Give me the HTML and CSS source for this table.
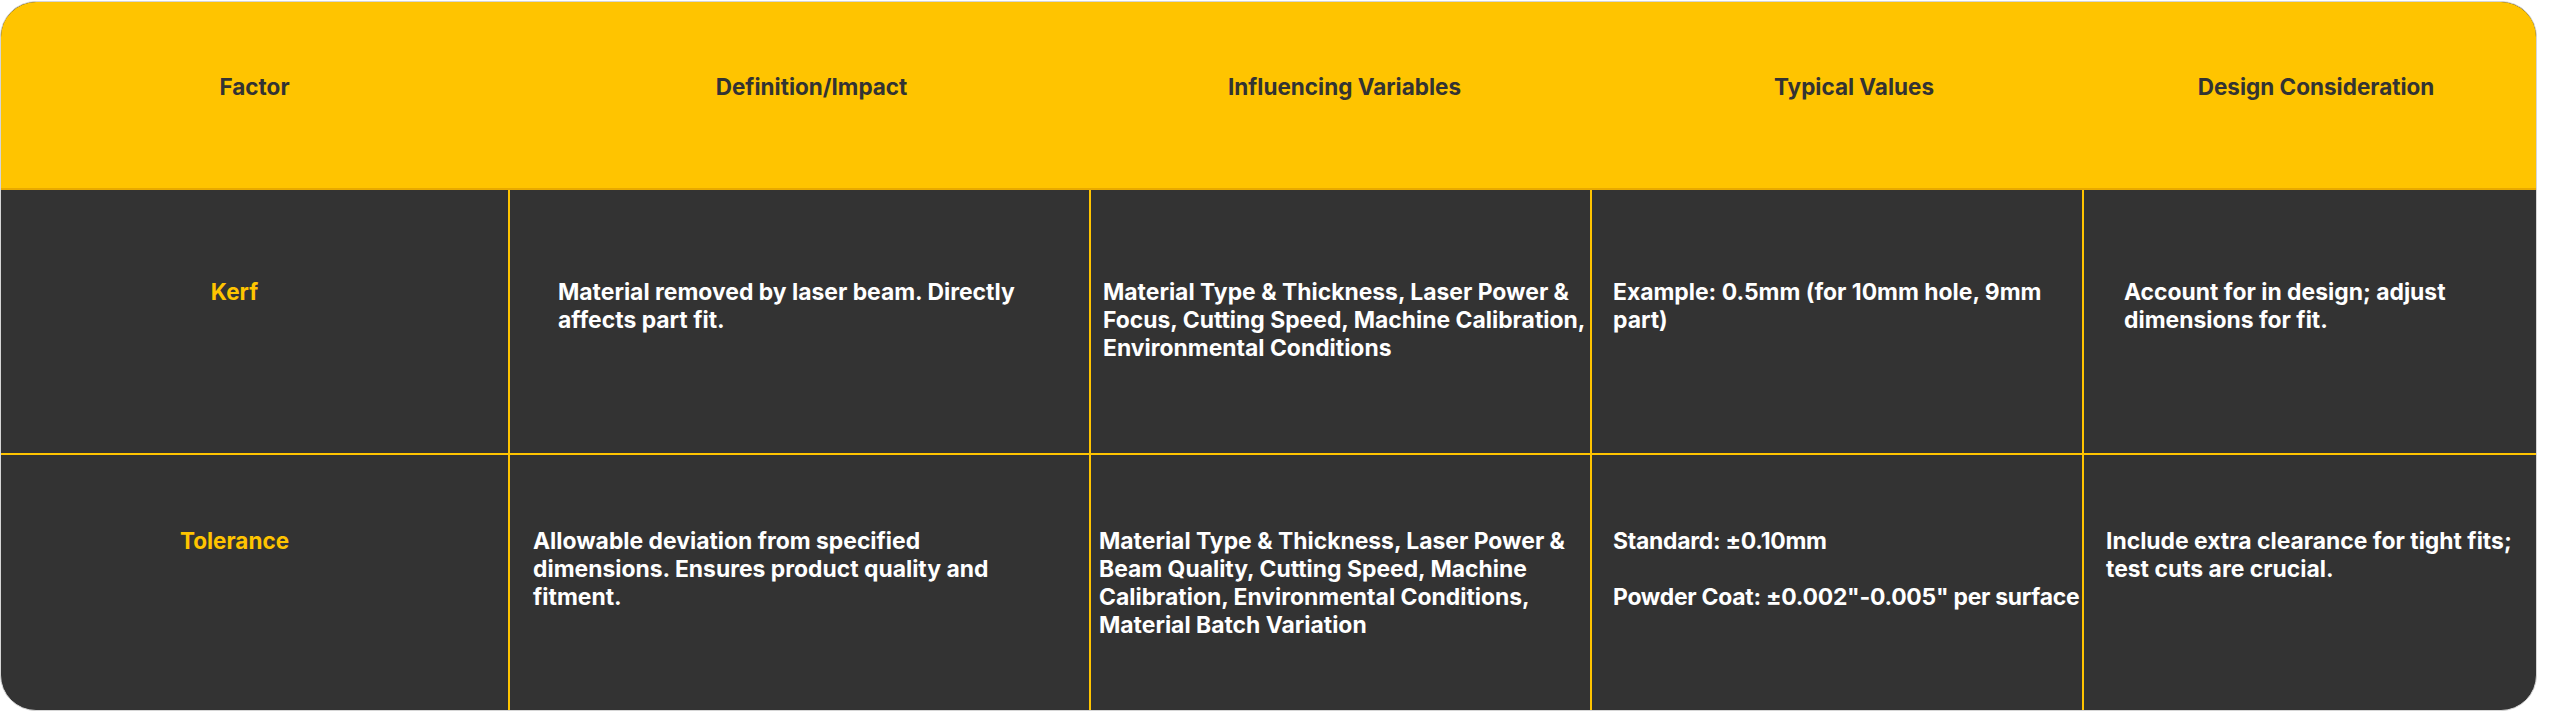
FILE: index.html
```html
<!DOCTYPE html>
<html lang="en">
<head>
<meta charset="utf-8">
<title>Laser Cutting Factors</title>
<link rel="stylesheet" href="styles.css">
</head>
<body>
<div class="card">
  <div class="table">
    <div class="th th-factor">Factor</div>
    <div class="th th-def">Definition/Impact</div>
    <div class="th th-var">Influencing Variables</div>
    <div class="th th-val">Typical Values</div>
    <div class="th th-design">Design Consideration</div>

    <div class="td r1 factor">Kerf</div>
    <div class="td r1 c1 k-def">Material removed by laser beam. Directly affects part fit.</div>
    <div class="td r1 c2 k-var">Material Type &amp; Thickness, Laser Power &amp; Focus, Cutting Speed, Machine Calibration, Environmental Conditions</div>
    <div class="td r1 c3 k-val">Example: 0.5mm (for 10mm hole, 9mm part)</div>
    <div class="td r1 c4 k-design">Account for in design; adjust dimensions for fit.</div>

    <div class="td r2 factor">Tolerance</div>
    <div class="td r2 c1 t-def">Allowable deviation from specified dimensions. Ensures product quality and fitment.</div>
    <div class="td r2 c2 t-var">Material Type &amp; Thickness, Laser Power &amp; Beam Quality, Cutting Speed, Machine Calibration, Environmental Conditions, Material Batch Variation</div>
    <div class="td r2 c3 t-val">
      <p>Standard: ±0.10mm</p>
      <p>Powder Coat: ±0.002"-0.005" per surface</p>
    </div>
    <div class="td r2 c4 t-design">Include extra clearance for tight fits; test cuts are crucial.</div>
  </div>
</div>
</body>
</html>
```
FILE: styles.css
```css
* { box-sizing: border-box; }

html, body {
  margin: 0;
  padding: 0;
  background: #ffffff;
}

body {
  font-family: Inter, "Noto Sans", "Liberation Sans", sans-serif;
  padding: 1px 0 0 0;
}

.card {
  width: 2537px;
  height: 710px;
  border: 1px solid #d6d6d6;
  border-radius: 36px;
  overflow: hidden;
  background: #333333;
}

.table {
  display: grid;
  grid-template-columns: 507px 581px 501px 492px 1fr;
  grid-template-rows: 188px 263px 1fr;
  height: 100%;
}

.th {
  background: #ffc400;
  color: #333333;
  font-size: 22.5px;
  font-weight: 700;
  line-height: 28px;
  display: flex;
  align-items: center;
  justify-content: center;
  padding-bottom: 16px;
  border-bottom: 2px solid #e8a900;
}

.th-def { padding-left: 26px; }
.th-var { padding-left: 10px; }
.th-val { padding-left: 36px; }
.th-design { padding-left: 14px; }

.td {
  color: #ffffff;
  font-size: 22.9px;
  font-weight: 700;
  line-height: 28px;
}

.td p { margin: 0; }
.td p + p { margin-top: 28px; }

.r1 { padding-top: 88px; }
.r2 { padding-top: 72px; border-top: 2px solid #ffc400; }

.c1, .c2, .c3, .c4 { border-left: 2px solid #ffc400; }

.factor {
  color: #ffc400;
  font-size: 22.5px;
  text-align: center;
  padding-right: 40px;
}

.k-def { padding-left: 48px; padding-right: 60px; }
.k-var { padding-left: 12px; padding-right: 0; }
.k-val { padding-left: 21px; padding-right: 0; }
.k-design { padding-left: 40px; padding-right: 40px; }

.t-def { padding-left: 23px; padding-right: 70px; }
.t-var { padding-left: 8px; padding-right: 10px; }
.t-val { padding-left: 21px; padding-right: 0; white-space: nowrap; letter-spacing: -0.25px; }
.t-design { padding-left: 22px; padding-right: 10px; }
```
